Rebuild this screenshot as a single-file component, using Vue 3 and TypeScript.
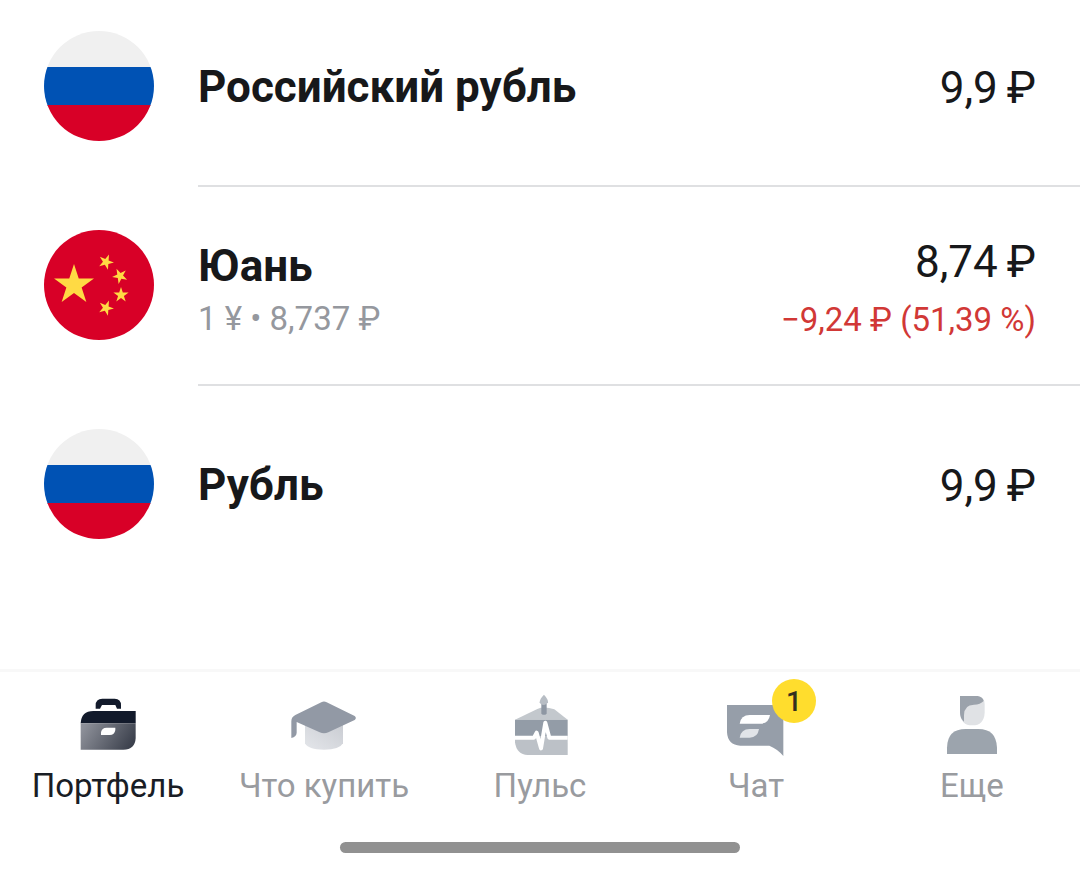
<script setup lang="ts">
interface Asset {
  id: number
  flag: 'ru' | 'cn'
  name: string
  rate?: string
  value: string
  change?: string
}

interface Tab {
  id: string
  label: string
  active?: boolean
  badge?: number
}

const assets: Asset[] = [
  { id: 1, flag: 'ru', name: 'Российский рубль', value: '9,9\u2009₽' },
  { id: 2, flag: 'cn', name: 'Юань', rate: '1 ¥ • 8,737 ₽', value: '8,74\u2009₽', change: '−9,24 ₽ (51,39 %)' },
  { id: 3, flag: 'ru', name: 'Рубль', value: '9,9\u2009₽' },
]

const tabs: Tab[] = [
  { id: 'portfolio', label: 'Портфель', active: true },
  { id: 'buy', label: 'Что купить' },
  { id: 'pulse', label: 'Пульс' },
  { id: 'chat', label: 'Чат', badge: 1 },
  { id: 'more', label: 'Еще' },
]

function starPoints(cx: number, cy: number, r: number, turn: number): string {
  const points: string[] = []
  for (let i = 0; i < 10; i++) {
    const radius = i % 2 === 0 ? r : r * 0.382
    const angle = ((turn - 90 + i * 36) * Math.PI) / 180
    points.push(`${(cx + radius * Math.cos(angle)).toFixed(2)},${(cy + radius * Math.sin(angle)).toFixed(2)}`)
  }
  return points.join(' ')
}

const stars: string[] = [
  starPoints(30, 55, 21, 0),
  starPoints(62, 32, 8, 22),
  starPoints(76, 46, 8, 46),
  starPoints(77, 65, 8, 0),
  starPoints(62, 78, 8, 22),
]
</script>

<template>
  <div class="screen">
    <main>
      <ul class="assets">
        <li v-for="asset in assets" :key="asset.id" class="asset" :class="{ detailed: asset.rate }">
          <svg v-if="asset.flag === 'ru'" class="flag" viewBox="0 0 110 110" aria-hidden="true">
            <clipPath :id="'round' + asset.id"><circle cx="55" cy="55" r="55" /></clipPath>
            <g :clip-path="`url(#round${asset.id})`">
              <rect width="110" height="37" fill="#f0f0f0" />
              <rect y="36" width="110" height="39" fill="#0052b4" />
              <rect y="74" width="110" height="36" fill="#d80027" />
            </g>
          </svg>
          <svg v-else class="flag" viewBox="0 0 110 110" aria-hidden="true">
            <circle cx="55" cy="55" r="55" fill="#d80027" />
            <polygon v-for="star in stars" :key="star" :points="star" fill="#ffda44" />
          </svg>
          <div class="body">
            <div class="info">
              <div class="name">{{ asset.name }}</div>
              <div v-if="asset.rate" class="rate">{{ asset.rate }}</div>
            </div>
            <div class="sum">
              <div class="value">{{ asset.value }}</div>
              <div v-if="asset.change" class="change">{{ asset.change }}</div>
            </div>
          </div>
        </li>
      </ul>
    </main>

    <nav class="tabs">
      <button v-for="tab in tabs" :key="tab.id" type="button" class="tab" :class="{ active: tab.active }">
        <span class="icon">
          <svg v-if="tab.id === 'portfolio'" viewBox="36 30 216 216" aria-hidden="true">
            <defs>
              <linearGradient id="caseFill" x1="0" y1="0.3" x2="1" y2="0.6">
                <stop offset="0" stop-color="#8d9099" />
                <stop offset="1" stop-color="#3b404c" />
              </linearGradient>
            </defs>
            <path d="M107 86V76Q107 56 127 56H164Q183 56 183 76V86H171L166 75H126L120 86Z" fill="#121a2b" />
            <path d="M62 130Q64 93 100 93H227V130Z" fill="#121a2b" />
            <path d="M62 130H227V174Q225 209 190 209H62Z" fill="url(#caseFill)" />
            <path d="M123 165V157Q125 143 140 143H166V150Q164 165 149 165Z" fill="#fff" />
          </svg>
          <svg v-else-if="tab.id === 'buy'" viewBox="39 15 216 216" aria-hidden="true">
            <defs>
              <linearGradient id="capFill" x1="0" y1="1" x2="1" y2="0">
                <stop offset="0" stop-color="#e4e6ea" />
                <stop offset="1" stop-color="#c9ccd2" />
              </linearGradient>
            </defs>
            <path d="M90 115H204V175Q194 194 147 194Q99 194 90 175Z" fill="url(#capFill)" />
            <path d="M139 52Q147 47 155 52L239 93Q246 99 239 105L160 142Q147 148 134 142L65 111V143Q65 154 49 159V109Q49 96 61 90Z" fill="#9299a5" />
          </svg>
          <svg v-else-if="tab.id === 'pulse'" viewBox="27 15 216 216" aria-hidden="true">
            <path d="M60 104L127 72Q147 63 178 73L218 104Z" fill="#c3c8cd" />
            <path d="M139 57H155V86Q147 93 139 86Z" fill="#8e97a3" />
            <path d="M147 29Q160 43 159 52Q156 60 147 60Q137 60 134 52Q134 42 147 29Z" fill="#b7bdc4" />
            <path d="M60 104H218V153H60Z" fill="#939ca7" />
            <path d="M60 153H218V210H98Q65 209 60 172Z" fill="#bcc1c7" />
            <path d="M60 158H117L125 143L138 190L151 113L163 158H218" fill="none" stroke="#fff" stroke-width="12" stroke-linejoin="round" />
          </svg>
          <svg v-else-if="tab.id === 'chat'" viewBox="30 60 216 216" aria-hidden="true">
            <path d="M51 105H220V258Q203 237 178 227H91Q53 225 51 187Z" fill="#969ea9" />
            <path d="M89 161Q93 135 119 135H180Q176 161 151 161Z" fill="#fff" />
            <path d="M89 203Q93 177 119 177H147Q143 203 119 203Z" fill="#e1e4e8" />
          </svg>
          <svg v-else viewBox="18 15 216 216" aria-hidden="true">
            <path d="M90 33H143Q164 37 164 57V83Q162 121 127 121Q92 121 90 83Z" fill="#e0e2e5" />
            <path d="M90 33H143Q159 36 161 48Q151 59 132 59Q102 59 102 91V110Q90 99 90 83Z" fill="#9ba2ab" />
            <path d="M51 207V188Q52 132 107 132H145Q199 132 201 188V207Z" fill="#9ca4ad" />
          </svg>
          <span v-if="tab.badge" class="badge">{{ tab.badge }}</span>
        </span>
        <span class="label">{{ tab.label }}</span>
      </button>
    </nav>
    <div class="home"></div>
  </div>
</template>

<style>
body {
  margin: 0;
  background: #fff;
}
</style>

<style scoped>
.screen {
  min-height: 100vh;
  display: flex;
  flex-direction: column;
  background: #fff;
  color: #17181a;
  font-family: Roboto, "Noto Sans", sans-serif;
}

main {
  flex: 1;
}

.assets {
  margin: 0;
  padding: 0;
  list-style: none;
}

.asset {
  display: flex;
  gap: 44px;
  padding-left: 44px;
}

.flag {
  flex: none;
  width: 110px;
  height: 110px;
  margin: 43px 0 46px;
}

.asset:first-child .flag {
  margin-top: 31px;
}

.body {
  flex: 1;
  display: flex;
  align-items: center;
  justify-content: space-between;
  gap: 24px;
  padding: 43px 44px 44px 0;
  border-bottom: 2px solid #dfe0e2;
}

.asset:first-child .body {
  padding-top: 31px;
}

.asset:last-child .body {
  border-bottom-color: transparent;
}

.detailed .body {
  padding-top: 31px;
  padding-bottom: 22px;
}

.name {
  font-size: 44px;
  line-height: 56px;
  font-weight: 700;
}

.value {
  font-size: 44px;
  line-height: 60px;
}

.info {
  padding-top: 2px;
}

.sum {
  padding-top: 4px;
  text-align: right;
}

.detailed .sum {
  padding-top: 0;
}

.rate,
.change {
  font-size: 33px;
}

.rate {
  line-height: 50px;
  color: #95989e;
}

.change {
  line-height: 56px;
  color: #d13836;
}

.tabs {
  display: flex;
  border-top: 3px solid #f8f8f8;
  padding: 18px 0 32px;
}

.tab {
  flex: 1 1 0;
  min-width: 0;
  display: flex;
  flex-direction: column;
  align-items: center;
  border: 0;
  padding: 0;
  background: none;
  color: #999b9f;
  font: inherit;
  cursor: pointer;
}

.tab.active {
  color: #191d25;
}

.icon {
  position: relative;
  width: 72px;
  height: 72px;
}

.icon svg {
  display: block;
  width: 72px;
  height: 72px;
}

.badge {
  position: absolute;
  top: -11px;
  left: 52px;
  width: 44px;
  height: 44px;
  border-radius: 50%;
  background: #ffdd2d;
  color: #33301f;
  font-size: 28px;
  line-height: 46px;
  font-weight: 500;
  text-align: center;
}

.label {
  font-size: 33px;
  line-height: 48px;
  white-space: nowrap;
}

.home {
  align-self: center;
  width: 37%;
  height: 11px;
  margin-bottom: 16px;
  border-radius: 6px;
  background: #919191;
}
</style>
